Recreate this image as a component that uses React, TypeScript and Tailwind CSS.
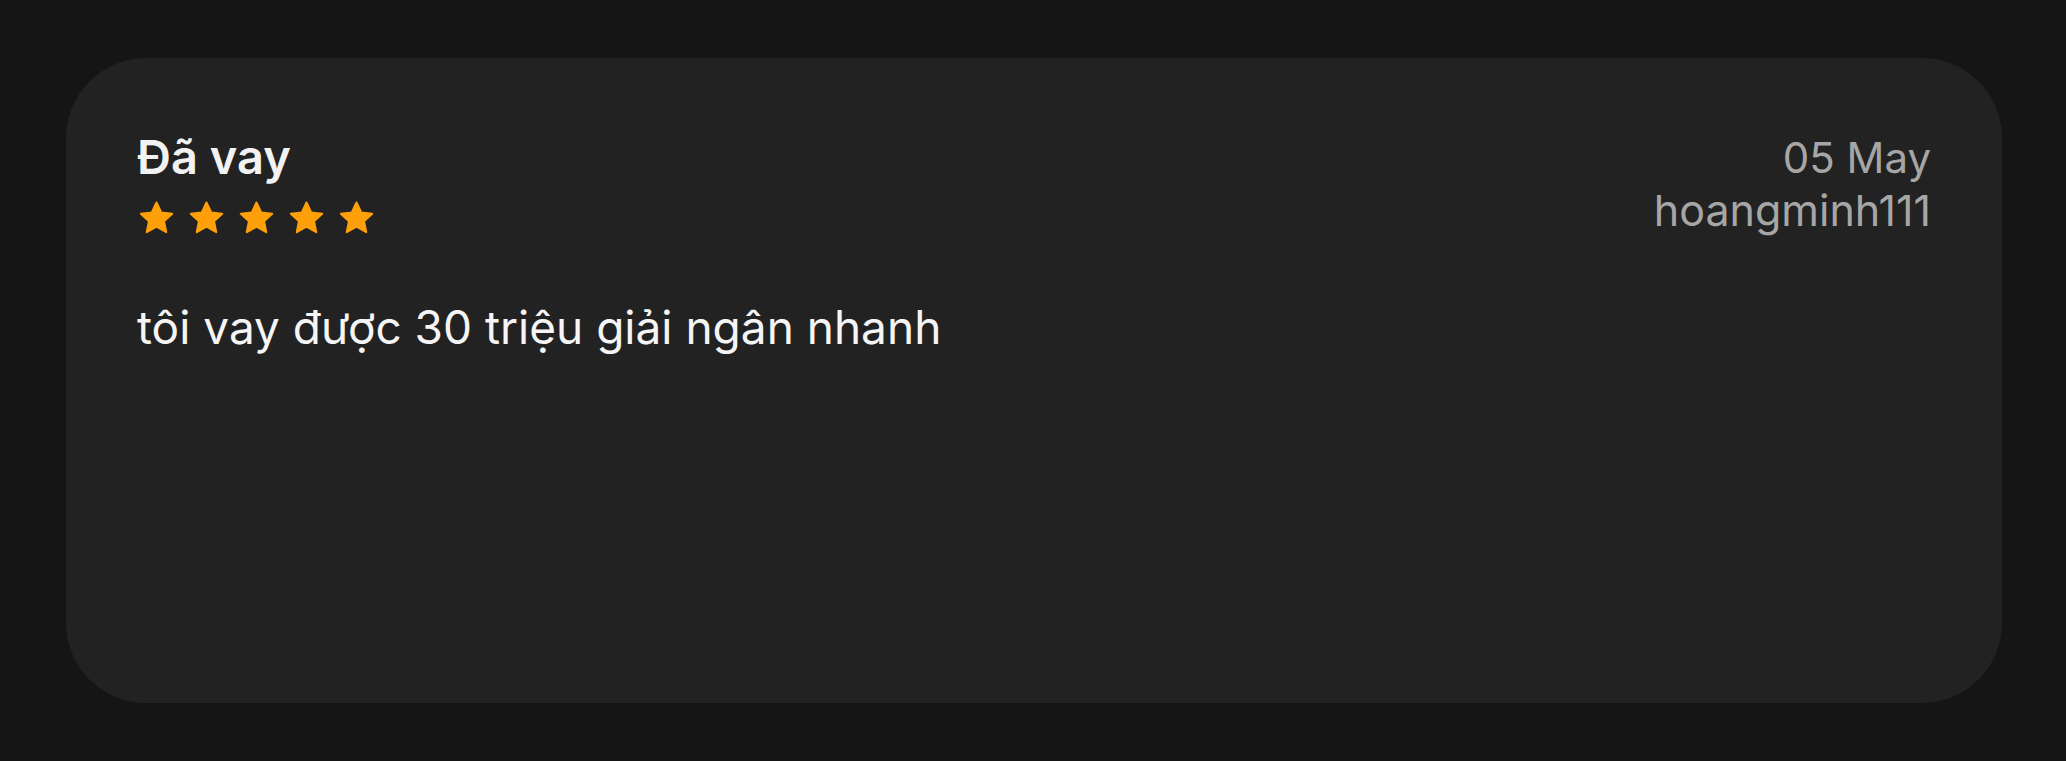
import React from 'react'

function Star() {
  return (
    <svg viewBox="0 0 24 24" className="w-[39px] h-[38px]">
      <path
        d="M12 2.2l2.95 6.35 6.95.8-5.15 4.75 1.4 6.85L12 17.5l-6.15 3.45 1.4-6.85L2.1 9.35l6.95-.8z"
        fill="#ffa00a"
        stroke="#ffa00a"
        strokeWidth="1.3"
        strokeLinejoin="round"
      />
    </svg>
  )
}

export default function App() {
  return (
    <div className="w-[2066px] h-[761px] bg-[#151515] pl-[66px] pt-[58px] font-['Inter','Noto_Sans',sans-serif]">
      <div className="w-[1936px] h-[645px] rounded-[80px] bg-[#222222] px-[71px] pt-[71px]">
        <div className="flex justify-between items-start">
          <div>
            <h2 className="text-[47px] leading-[56px] font-semibold text-[#f2f2f2]">Đã vay</h2>
            <div className="flex gap-[11px] mt-[14px]">
              <Star />
              <Star />
              <Star />
              <Star />
              <Star />
            </div>
          </div>
          <div className="pt-[3px] text-right leading-[52px] text-[#a6a6a6]">
            <p className="text-[42px]">05 May</p>
            <p className="text-[43px]">hoangminh111</p>
          </div>
        </div>
        <p className="mt-[62px] text-[46px] leading-[56px] text-[#f5f5f5]">tôi vay được 30 triệu giải ngân nhanh</p>
      </div>
    </div>
  )
}
